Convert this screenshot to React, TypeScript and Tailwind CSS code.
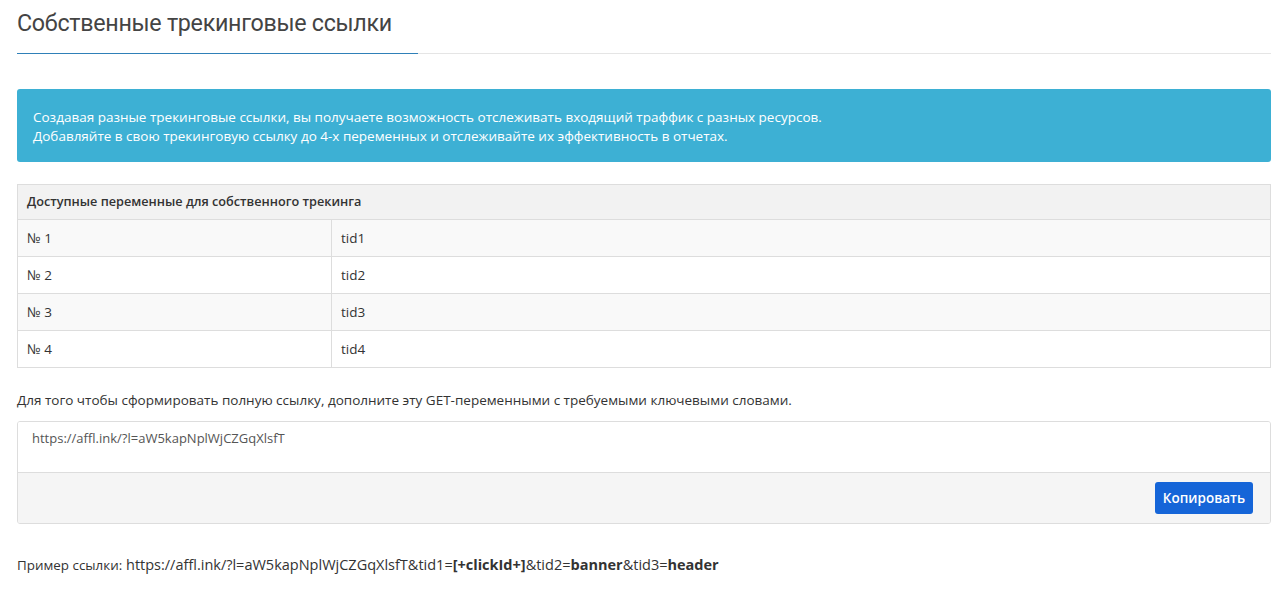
import React from 'react';

const rows = [
  { n: '№ 1', v: 'tid1' },
  { n: '№ 2', v: 'tid2' },
  { n: '№ 3', v: 'tid3' },
  { n: '№ 4', v: 'tid4' },
];

export default function App() {
  const link = 'https://affl.ink/?l=aW5kapNplWjCZGqXlsfT';

  return (
    <div className="min-h-[589px] bg-white pl-[17px] pr-[13px] pt-[6px] text-[13.5px] text-[#333] font-['Open_Sans',sans-serif]">
      {/* Page title */}
      <div className="relative border-b border-[#e5e5e5] pb-[12px]">
        <h1 className="text-[24px] leading-[35px] text-[#444] font-['Roboto',sans-serif] tracking-[-0.3px] origin-left scale-x-[0.97]">
          Собственные трекинговые ссылки
        </h1>
        <div className="absolute left-0 bottom-[-1px] h-[1px] w-[401px] bg-[#2f80b8]" />
      </div>

      {/* Info alert */}
      <div className="mt-[35px] rounded-[3px] bg-[#3db0d4] px-[16px] pt-[19px] pb-[16px] text-white leading-[19px]">
        <div>Создавая разные трекинговые ссылки, вы получаете возможность отслеживать входящий траффик с разных ресурсов.</div>
        <div>Добавляйте в свою трекинговую ссылку до 4-х переменных и отслеживайте их эффективность в отчетах.</div>
      </div>

      {/* Variables table */}
      <table className="mt-[22px] w-full border-collapse border border-[#ddd]">
        <thead>
          <tr className="bg-[#f2f2f2]">
            <th colSpan={2} className="h-[35px] px-[9px] text-left font-semibold text-[12.7px] border-b border-[#ddd]">
              Доступные переменные для собственного трекинга
            </th>
          </tr>
        </thead>
        <tbody>
          {rows.map((r, i) => (
            <tr key={r.v} className={i % 2 === 0 ? 'bg-[#f9f9f9]' : 'bg-white'}>
              <td className="h-[37px] w-[314px] px-[9px] border-b border-r border-[#ddd]">{r.n}</td>
              <td className="h-[37px] px-[9px] border-b border-[#ddd]">{r.v}</td>
            </tr>
          ))}
        </tbody>
      </table>

      <p className="mt-[23px] leading-[18px]">
        Для того чтобы сформировать полную ссылку, дополните эту GET-переменными с требуемыми ключевыми словами.
      </p>

      {/* Link box */}
      <div className="mt-[12px] rounded-[3px] border border-[#ddd] overflow-hidden">
        <div className="h-[50px] bg-white px-[14px] pt-[7px] text-[13px] text-[#555] leading-[18px]">{link}</div>
        <div className="flex h-[51px] items-center justify-end border-t border-[#ddd] bg-[#f5f5f5] px-[17px]">
          <button className="h-[32px] w-[98px] rounded-[3px] bg-[#1565d8] text-[13.5px] font-semibold text-white">
            Копировать
          </button>
        </div>
      </div>

      <p className="mt-[32px] leading-[18px] text-[14.5px]">
        <span className="text-[13.4px]">Пример ссылки:</span> {link}&amp;tid1=<b className="font-bold">[+clickId+]</b>&amp;tid2=<b className="font-bold">banner</b>&amp;tid3=<b className="font-bold">header</b>
      </p>
    </div>
  );
}
